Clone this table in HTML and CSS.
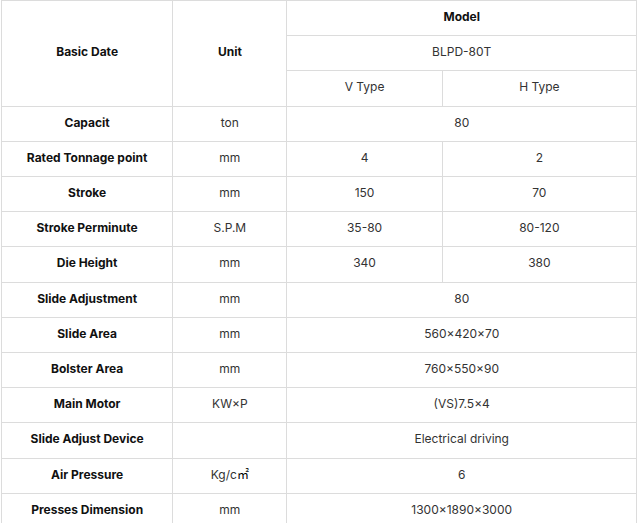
FILE: index.html
```html
<!DOCTYPE html>
<html>
<head>
<meta charset="utf-8">
<link rel="stylesheet" href="styles.css">
</head>
<body>
<table class="spec">
  <colgroup>
    <col class="c1"><col class="c2"><col class="c3"><col class="c4">
  </colgroup>
  <tr>
    <td rowspan="3" class="th">Basic Date</td>
    <td rowspan="3" class="th">Unit</td>
    <td colspan="2" class="th">Model</td>
  </tr>
  <tr><td colspan="2">BLPD-80T</td></tr>
  <tr><td>V Type</td><td>H Type</td></tr>
  <tr><td class="th">Capacit</td><td>ton</td><td colspan="2">80</td></tr>
  <tr><td class="th">Rated Tonnage point</td><td>mm</td><td>4</td><td>2</td></tr>
  <tr><td class="th">Stroke</td><td>mm</td><td>150</td><td>70</td></tr>
  <tr><td class="th">Stroke Perminute</td><td>S.P.M</td><td>35-80</td><td>80-120</td></tr>
  <tr><td class="th">Die Height</td><td>mm</td><td>340</td><td>380</td></tr>
  <tr><td class="th">Slide Adjustment</td><td>mm</td><td colspan="2">80</td></tr>
  <tr><td class="th">Slide Area</td><td>mm</td><td colspan="2">560×420×70</td></tr>
  <tr><td class="th">Bolster Area</td><td>mm</td><td colspan="2">760×550×90</td></tr>
  <tr><td class="th">Main Motor</td><td>KW×P</td><td colspan="2">(VS)7.5×4</td></tr>
  <tr><td class="th">Slide Adjust Device</td><td></td><td colspan="2">Electrical driving</td></tr>
  <tr><td class="th">Air Pressure</td><td>Kg/c<span class="cjk">㎡</span></td><td colspan="2">6</td></tr>
  <tr><td class="th">Presses Dimension</td><td>mm</td><td colspan="2">1300×1890×3000</td></tr>
</table>
</body>
</html>
```
FILE: styles.css
```css
html, body {
  margin: 0;
  padding: 0;
  background: #fff;
}
body {
  font-family: Inter, "Noto Sans", sans-serif;
  font-size: 12px;
  color: #333;
}
.spec {
  border-collapse: collapse;
  table-layout: fixed;
  width: 636px;
  margin-left: 1px;
}
.c1 { width: 171px; }
.c2 { width: 114px; }
.c3 { width: 155px; }
.c4 { width: 194px; }
.spec td {
  border: 1px solid #dcdcdc;
  text-align: center;
  vertical-align: middle;
  padding: 8px 4px 10px;
  line-height: 16.2px;
}
.spec td.th {
  font-weight: 700;
  color: #111;
}
.cjk {
  font-family: "Liberation Sans", "Noto Sans CJK SC", sans-serif;
  font-size: 12px;
  color: #000;
}
```
